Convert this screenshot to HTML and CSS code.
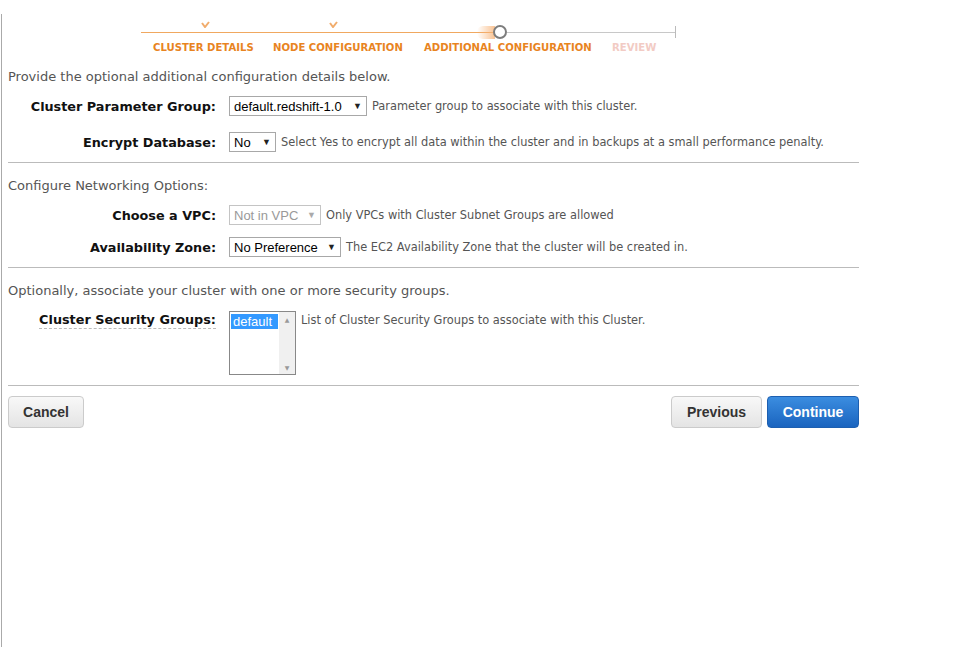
FILE: index.html
```html
<!DOCTYPE html>
<html lang="en">
<head>
    <meta charset="UTF-8">
    <title>Launch Cluster - Additional Configuration</title>
    <link rel="stylesheet" href="styles.css">
</head>
<body>

    <div class="page">
        <!-- Wizard progress -->
        <div class="stepper">
            <div class="checks">
                <span class="step s1"><svg width="9" height="7" viewBox="0 0 9 7"><polyline points="1,2 4,6 8,1" fill="none" stroke="#f1ac6c" stroke-width="2"/></svg></span>
                <span class="step s2"><svg width="9" height="7" viewBox="0 0 9 7"><polyline points="1,2 4,6 8,1" fill="none" stroke="#f1ac6c" stroke-width="2"/></svg></span>
                <span class="step s3"></span>
                <span class="step s4"></span>
            </div>
            <div class="track">
                <div class="done"><div class="glow"></div></div>
                <div class="current"></div>
                <div class="todo"></div>
                <div class="end"></div>
            </div>
            <div class="labels">
                <span class="step s1">CLUSTER DETAILS</span>
                <span class="step s2">NODE CONFIGURATION</span>
                <span class="step s3">ADDITIONAL CONFIGURATION</span>
                <span class="step s4 pending">REVIEW</span>
            </div>
        </div>

        <p class="intro first">Provide the optional additional configuration details below.</p>

        <div class="row">
            <label class="field-label">Cluster Parameter Group:</label>
            <div class="select w-param">default.redshift-1.0<span class="arrow">&#9660;</span></div>
            <span class="help">Parameter group to associate with this cluster.</span>
        </div>

        <div class="row wide">
            <label class="field-label">Encrypt Database:</label>
            <div class="select w-encrypt">No<span class="arrow">&#9660;</span></div>
            <span class="help">Select Yes to encrypt all data within the cluster and in backups at a small performance penalty.</span>
        </div>

        <hr>

        <p class="intro">Configure Networking Options:</p>

        <div class="row">
            <label class="field-label">Choose a VPC:</label>
            <div class="select w-vpc disabled">Not in VPC<span class="arrow">&#9660;</span></div>
            <span class="help">Only VPCs with Cluster Subnet Groups are allowed</span>
        </div>

        <div class="row next">
            <label class="field-label">Availability Zone:</label>
            <div class="select w-zone">No Preference<span class="arrow">&#9660;</span></div>
            <span class="help">The EC2 Availability Zone that the cluster will be created in.</span>
        </div>

        <hr>

        <p class="intro">Optionally, associate your cluster with one or more security groups.</p>

        <div class="row top">
            <label class="field-label"><span class="dashed">Cluster Security Groups:</span></label>
            <div class="listbox">
                <div class="options">
                    <span class="option selected">default</span>
                </div>
                <div class="scrollbar">
                    <span class="up">&#9650;</span>
                    <span class="down">&#9660;</span>
                </div>
            </div>
            <span class="help">List of Cluster Security Groups to associate with this Cluster.</span>
        </div>

        <hr>

        <div class="actions">
            <button class="btn">Cancel</button>
            <div class="right">
                <button class="btn">Previous</button>
                <button class="btn primary">Continue</button>
            </div>
        </div>
    </div>

</body>
</html>
```

FILE: styles.css
```css
* {
    margin: 0;
    padding: 0;
    box-sizing: border-box;
}

body {
    background: #fff;
    font-family: "DejaVu Sans", Verdana, sans-serif;
}

/* Page area with the thin rule on the left */
.page {
    margin: 14px 0 0 1px;
    border-left: 1px solid #aaa;
    padding-left: 6px;
    width: 858px;
    min-height: calc(100vh - 14px);
}

/* Wizard progress bar */
.stepper {
    padding-top: 7px;
}

.checks,
.labels {
    display: flex;
    margin-left: 145px;
}

.step {
    display: block;
    text-align: center;
    white-space: nowrap;
}

.s1 { width: 100px; }
.s2 { width: 129px; margin-left: 20px; }
.s3 { width: 167px; margin-left: 22px; }
.s4 { width: 44px; margin-left: 21px; }

.checks {
    height: 7px;
}

.checks svg {
    display: block;
    margin: 0 auto;
}

.checks .s1 svg { margin-left: 48px; }
.checks .s2 svg { margin-left: 56px; }

.track {
    display: flex;
    align-items: center;
    height: 14px;
    margin: -3px 0 0 133px;
    width: 535px;
}

.track .done {
    position: relative;
    width: 352px;
    height: 1px;
    background: #f0a860;
}

.track .glow {
    position: absolute;
    right: -2px;
    top: -6px;
    width: 18px;
    height: 13px;
    border-radius: 6px 0 0 6px;
    background: linear-gradient(to right, rgba(248, 190, 140, 0), rgba(248, 180, 120, 0.8));
}

.track .current {
    position: relative;
    width: 14px;
    height: 14px;
    border: 2px solid #7d7d7d;
    border-radius: 50%;
    background: #fff;
}

.track .todo {
    flex: 1;
    height: 1px;
    background: #c8c8c8;
}

.track .end {
    width: 1px;
    height: 12px;
    background: #bbb;
}

.labels {
    margin-top: 3px;
    font-size: 10.1px;
    line-height: 12px;
    font-weight: bold;
    color: #e8841f;
}

.labels .pending {
    color: #f2cbc4;
}

/* Section text */
.intro {
    margin-top: 15px;
    font-size: 13px;
    line-height: 16px;
    color: #555;
}

hr {
    border: none;
    border-top: 1px solid #bbb;
    height: 0;
    margin-top: 10px;
}

/* Form rows */
.row {
    display: flex;
    align-items: center;
    height: 20px;
    margin-top: 11px;
}

.row.wide {
    margin-top: 16px;
}

.row.next {
    margin-top: 12px;
}

.row.top {
    align-items: flex-start;
    height: auto;
    margin-top: 12px;
}

.field-label {
    width: 208px;
    text-align: right;
    font-size: 12.8px;
    font-weight: bold;
    color: #111;
    margin-right: 13px;
}

.row.top .field-label {
    padding-top: 1px;
}

.dashed {
    border-bottom: 1px dashed #bbb;
    padding-bottom: 1px;
}

.select {
    display: flex;
    align-items: center;
    justify-content: space-between;
    height: 20px;
    padding: 0 4px;
    border: 1px solid #a8a8a8;
    background: #fff;
    font-family: "Liberation Sans", Arial, sans-serif;
    font-size: 13px;
    color: #000;
}

.select .arrow {
    font-size: 9px;
    color: #222;
}

.select.disabled {
    color: #999;
    border-color: #c4c4c4;
}

.select.disabled .arrow {
    color: #aaa;
}

.w-param { width: 138px; }
.w-encrypt { width: 47px; }
.w-vpc { width: 92px; }
.w-zone { width: 112px; }

.help {
    margin-left: 5px;
    font-size: 11.4px;
    color: #555;
}

.row.top .help {
    padding-top: 2px;
}

/* Multi select list */
.listbox {
    display: flex;
    width: 67px;
    height: 64px;
    border: 1px solid #888;
    background: #fff;
}

.listbox .options {
    flex: 1;
    padding: 2px 1px;
}

.option {
    display: block;
    font-family: "Liberation Sans", Arial, sans-serif;
    font-size: 13px;
    line-height: 15px;
    padding-left: 2px;
}

.option.selected {
    background: #3399ff;
    color: #fff;
}

.scrollbar {
    display: flex;
    flex-direction: column;
    justify-content: space-between;
    width: 16px;
    background: #f0f0f0;
    font-size: 6px;
    color: #999;
    text-align: center;
    padding: 4px 0 3px;
}

/* Buttons */
.actions {
    display: flex;
    justify-content: space-between;
    margin-top: 10px;
}

.actions .right {
    display: flex;
    gap: 5px;
}

.btn {
    height: 32px;
    border: 1px solid #cbcbcb;
    border-radius: 4px;
    background: linear-gradient(#f8f8f8, #e4e4e4);
    font-family: "Liberation Sans", Arial, sans-serif;
    font-size: 14px;
    font-weight: bold;
    color: #333;
    cursor: pointer;
}

.btn:first-child {
    width: 76px;
}

.right .btn { width: 91px; }

.btn.primary {
    width: 92px;
    border-color: #1d5fb0;
    background: linear-gradient(#3b8de0, #1a64bf);
    color: #fff;
}
```
